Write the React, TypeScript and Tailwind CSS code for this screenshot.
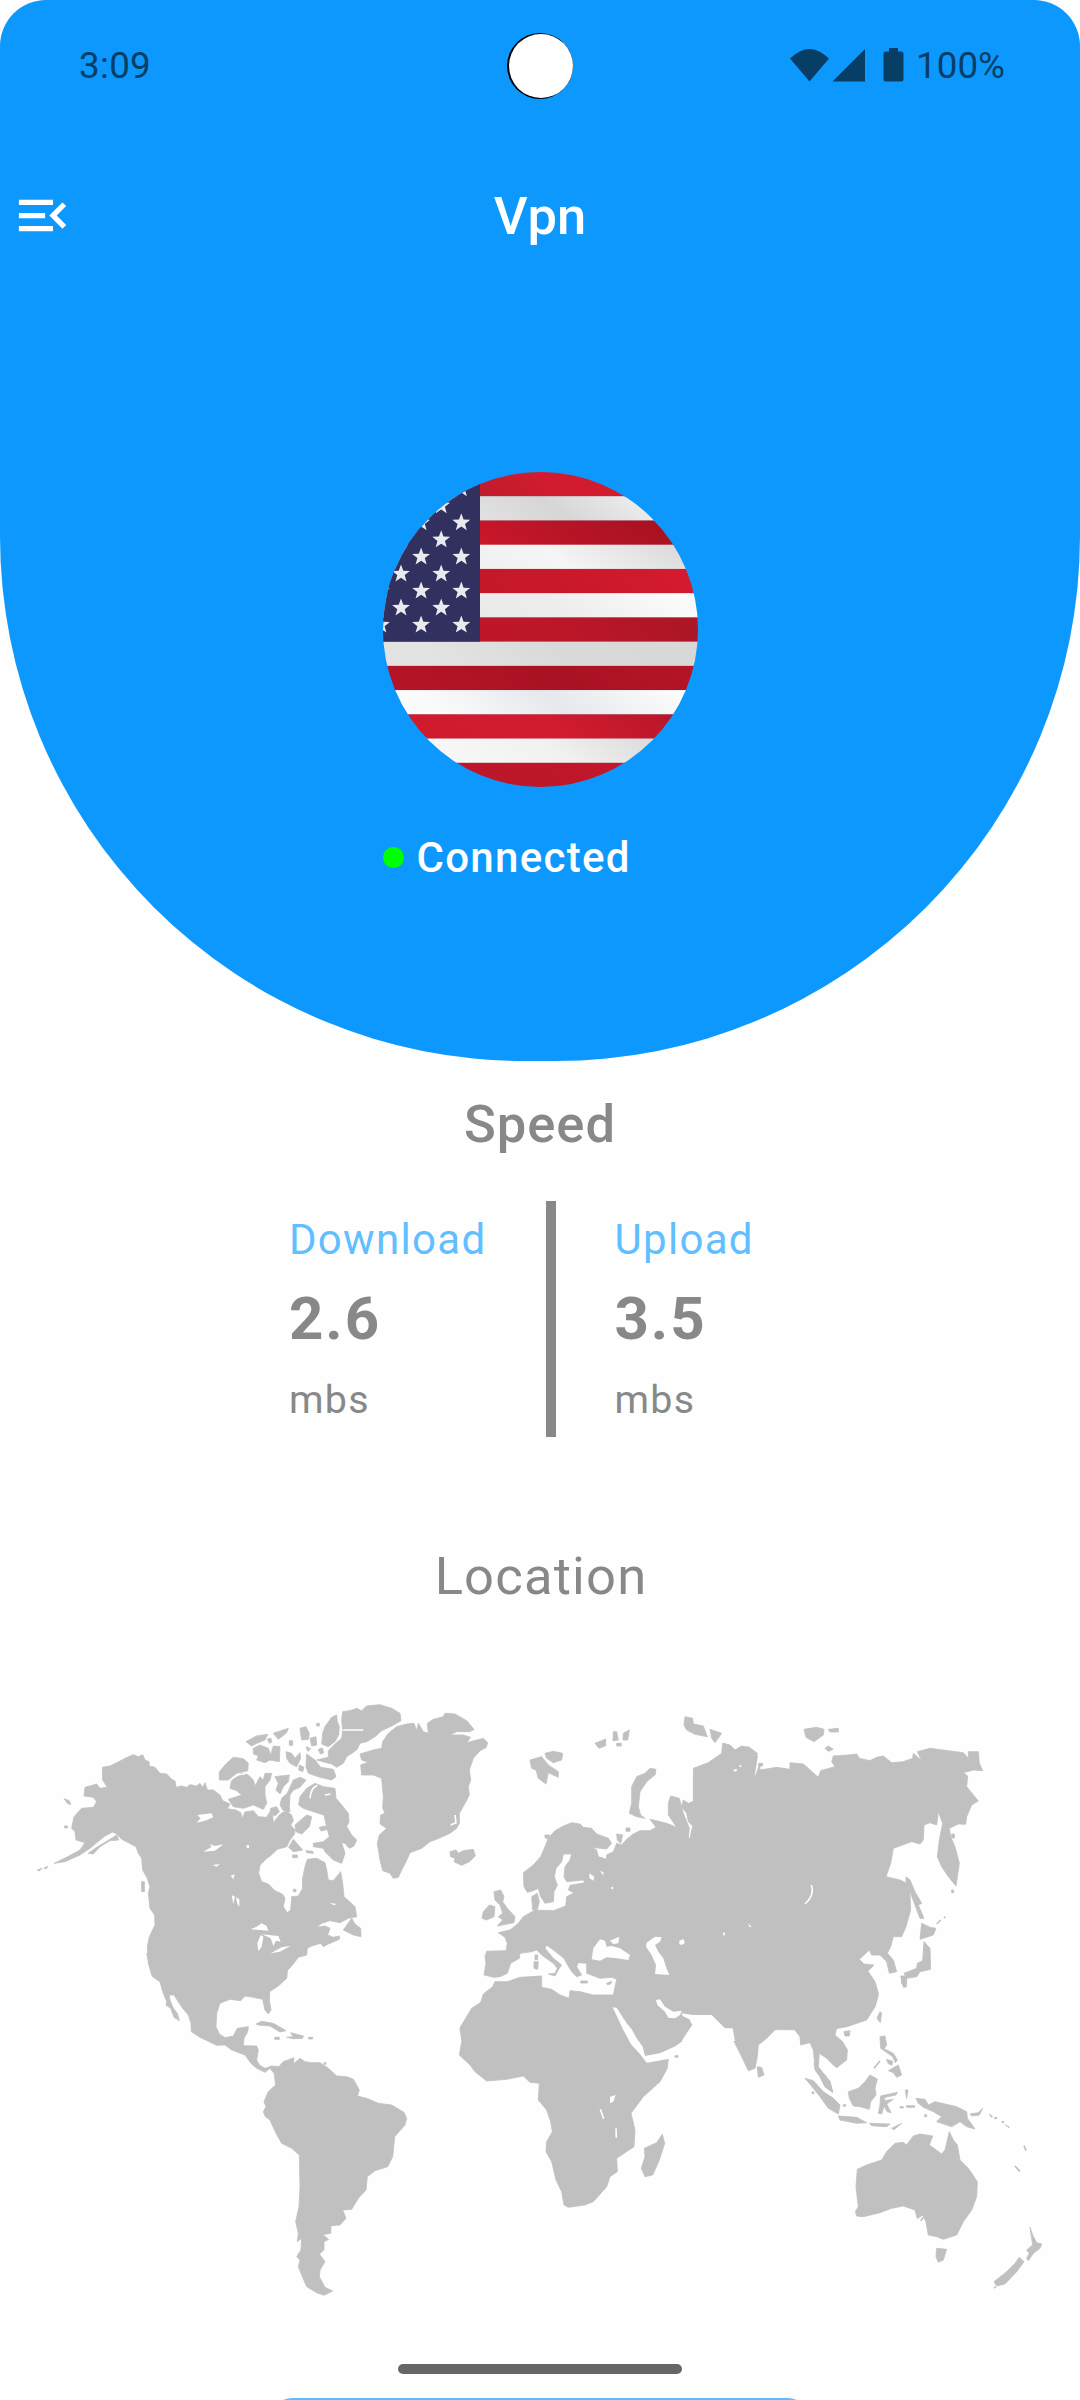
import { MdMenuOpen } from "react-icons/md";

type Region = { x: number; y: number; land: string[]; water?: string[]; landLines?: string; waterLines?: string };

// Each region has its own origin; its coordinates are thirds of a pixel.
const regions: Region[] = [
  {
    // Eurasia, west
    x: 420, y: 1700,
    land: [
      "M1020 190L1005 232L998 228L1008 190L1012 160L985 140L958 142L948 165L935 140L912 130L908 160L915 175L870 185L845 215L840 240L858 250L820 270L825 285L855 305L860 320L830 300L805 310L790 300L785 320L800 340L805 365L818 378L810 415L805 415L808 385L790 340L778 295L752 288L745 310L745 345L770 382L740 370L700 360L690 358L708 382L690 392L660 392L640 402L620 418L605 435L590 430L580 455L560 465L560 478L535 470L530 450L515 442L560 447L575 430L565 415L530 402L515 385L490 382L480 372L455 368L430 378L405 392L385 415L375 440L362 470L340 495L310 518L312 560L322 577L340 572L355 565L362 590L375 610L400 605L402 575L412 555L403 530L408 505L425 485L430 462L455 462L450 480L435 500L432 530L440 545L490 540L495 548L450 556L445 570L462 578L440 590L437 618L400 632L345 630L310 650L295 670L270 690L235 698L255 712L262 730L258 752L200 754L195 770L198 790L192 825L222 832L240 830L262 820L272 790L298 775L300 760L335 755L350 750L365 765L400 790L412 805L405 820L385 822L405 828L418 805L425 795L400 775L375 745L380 735L400 750L432 775L440 790L455 815L470 830L485 825L470 800L475 788L500 790L500 820L540 835L575 832L590 838L580 885L550 885L520 885L480 875L450 872L447 895L420 885L395 868L365 862L365 828L300 832L262 845L225 845L218 860L190 882L180 915L150 940L120 985L125 1020L1020 1020Z",
      "M335 590L352 580L358 605L352 628L338 630Z",
      "M222 575L242 570L252 590L248 605L262 625L285 650L282 668L232 678L248 660L235 650L248 640L240 615L225 600Z",
      "M190 635L208 615L225 620L222 650L200 660L186 655Z",
      "M342 785L355 785L353 808L342 805ZM345 765h8v14h-8zM482 843h20v6h-20zM560 850l15-6l-3 8l-10 2z",
      "M330 180L365 170L385 195L415 215L415 232L385 218L378 252L355 235L348 210L335 205Z",
      "M375 160L400 154L428 160L425 180L400 188L380 175Z",
      "M525 130l20-8l12-5v20l-20 8zM580 95l10 0l5 25l-16 2zM610 100l18-10l-5 30l-14 0zM590 130l14 0v8h-14z",
      "M690 205L708 208L705 225L680 245L660 275L655 320L662 345L675 355L650 350L628 340L635 310L635 260L650 230L675 220Z",
      "M795 50L818 55L820 72L850 78L862 110L825 103L800 90L792 75Z",
      "M870 88L905 100L885 128L875 115ZM618 384h12v10h-12zM590 402L608 405L602 430L592 420ZM375 405l14 0l-4 12l-10-4z",
    ],
    water: [
      "M540 718L555 722L560 740L575 738L600 745L630 765L625 780L590 775L560 772L540 782L515 778L520 745Z",
      "M570 722L598 710L595 730L580 732Z",
      "M680 728L705 710L725 712L720 725L705 735L715 755L730 775L738 800L748 825L705 822L708 795L695 765L678 740Z",
      "M778 722L790 717L795 728L786 735L778 732Z",
      "M708 900L720 898L735 920L760 935L785 932L780 945L765 955L745 953L735 935L712 915Z",
      "M785 940L820 945L875 945L915 985L938 985L945 1023L785 1023L800 1000L817 975L808 958L788 948Z",
      "M508 520l15 10l-3 12l-12-8zM540 512l10 5v10zM574 561h6v6h-6zM908 700l8-4l-4 14zM983 670l12 10l-6 2z",
    ],
  },
  {
    // Eurasia, east
    x: 700, y: 1690,
    land: [
      "M-20 235L25 218L65 190L68 160L90 165L105 180L125 168L155 178L172 200L162 262L180 240L230 232L270 238L270 218L310 222L355 262L362 242L405 230L395 215L400 198L445 195L470 192L478 205L510 212L530 202L550 198L575 218L610 215L638 205L640 190L665 212L652 185L690 175L790 188L805 205L805 185L835 185L838 220L848 242L820 240L790 248L803 258L800 290L835 333L815 345L800 380L797 403L775 402L748 415L752 440L765 470L778 520L768 588L745 560L725 530L712 500L718 450L728 400L715 365L710 405L690 398L672 405L670 450L660 462L635 455L580 475L572 520L558 560L600 570L620 580L630 610L632 660L618 710L605 740L580 740L572 770L562 790L580 810L590 845L568 850L560 815L540 795L515 795L508 780L478 808L492 822L522 825L502 845L525 880L535 915L525 950L495 990L440 1010L380 1020L95 1018L70 1010L40 975L-20 970Z",
      "M618 560L630 570L645 605L665 640L655 645L672 685L660 685L645 645L632 610L618 575Z",
      "M665 700L690 712L708 715L700 735L685 740L660 748Z",
      "M672 755L690 775L692 838L660 845L650 860L620 865L612 850L650 835L652 820L668 812Z",
      "M605 865L620 870L618 892L604 880ZM540 965L545 970L541 998L531 985Z",
      "M312 118L350 112L372 118L370 135L342 155L318 142ZM385 118L415 115L415 126L390 126ZM375 175L385 168L400 178L385 184ZM176 220h12v8h-12zM755 432h8v12h-8zM755 600h6v8h-6z",
    ],
    water: ["M98 240L112 236L108 246ZM118 226h6v5h-6z"],
    landLines: "M710 702L722 690M732 684L736 680",
    waterLines: "M334 585Q345 615 315 642",
  },
  {
    // South Asia and Indochina
    x: 620, y: 1900,
    land: [
      "M190 340L275 345L315 388L335 382L340 420L365 470L385 512L405 505L412 470L415 435L440 415L472 382L510 372L540 410L542 435L570 428L580 450L585 500L600 530L615 560L638 578L630 545L610 520L595 500L598 460L620 475L640 495L650 503L680 480L682 450L668 425L645 405L650 385L685 378L740 360L765 320L775 280L765 245L745 215L600 100L200 100Z",
      "M412 500L425 502L432 525L415 532ZM672 395L690 392L688 408L675 408Z",
    ],
  },
  {
    // Africa and Arabia
    x: 430, y: 1940,
    land: [
      "M165 160L155 185L125 205L92 260L96 300L88 345L120 375L135 395L170 423L230 418L280 408L300 427L328 430L325 480L350 510L362 545L367 575L350 605L348 635L365 665L378 720L395 755L402 795L415 802L465 795L490 785L530 740L540 710L562 695L560 655L612 620L615 570L603 520L640 470L690 425L712 385L715 357L650 368L635 345L600 310L585 280L550 205L540 180L415 200L300 150Z",
      "M560 200L645 348L690 340L735 318L775 290L788 255L760 230L720 230L680 180L560 160Z",
      "M697 583L704 610L688 660L668 705L645 710L634 685L645 650L643 625L680 608ZM735 347h9v5h-9z",
    ],
    water: [
      "M548 202L560 203L590 250L605 268L620 295L638 320L645 348L690 340L740 318L718 356L650 368L630 342L605 315L580 270Z",
      "M540 470L557 465L550 485L540 490Z",
    ],
    waterLines: "M511 508L521 536M558 565L559 593",
  },
  {
    // Canada, Alaska and the northern United States
    x: 0, y: 1680,
    land: [
      "M307 262L330 258L350 248L385 230L400 224L415 230L428 224L435 240L447 245L448 258L465 262L480 280L500 282L515 298L525 303L528 322L545 318L560 322L570 314L590 318L600 310L608 322L615 308L622 330L640 330L660 345L668 362L690 372L682 386L708 390L722 398L727 415L735 396L760 392L775 410L800 412L808 398L818 405L820 428L838 405L850 396L862 395L875 405L880 422L872 435L885 450L884 462L870 480L860 500L832 508L815 524L795 540L780 556L776 580L785 605L805 612L825 632L848 643L855 655L850 680L862 698L872 690L875 650L895 648L908 625L907 600L915 560L922 538L950 535L975 548L980 570L985 600L1000 602L1022 575L1028 610L1032 650L1065 680L1070 710L1045 715L1020 728L990 722L965 730L950 742L975 738L990 745L983 765L1000 772L1018 768L1018 778L985 792L970 800L962 790L935 798L922 805L920 825L895 832L880 852L862 872L860 895L835 918L808 935L808 950L700 945L500 945L480 905L458 890L445 850L442 800L448 770L465 735L464 705L450 685L445 640L450 620L442 595L428 570L425 535L415 520L408 500L385 488L365 478L350 462L338 456L315 468L300 480L270 505L240 525L195 545L162 550L200 532L240 510L255 488L228 480L225 455L215 445L222 410L245 385L280 382L290 365L280 352L252 348L255 322L290 312L300 325L322 322L308 300Z",
      "M265 520L290 502L335 475L350 465L356 480L330 482L300 500L280 522Z",
      "M425 605h8v30h-8zM448 668L475 690L484 706L462 692ZM192 356L208 362L212 374L202 370ZM194 438h8v6h-8zM112 570l14-5l-8 8zM132 564l12-5l-6 8z",
    ],
    water: [
      "M590 428L602 415L592 405L635 400L640 412L615 422Z",
      "M610 515L635 500L628 492L645 498L670 493L645 512Z",
      "M638 555L660 552L650 560ZM692 588L704 582L700 598ZM740 495h7v9h-7z",
      "M695 645L705 650L700 672ZM708 652L718 658L718 680L712 672Z",
      "M752 748L770 740L785 730L800 738L805 752L780 750Z",
      "M775 814L772 790L782 765L790 770L785 800Z",
      "M786 763L835 768L842 785L828 782L820 798L812 775Z",
      "M812 820L845 802L872 797L840 815Z",
      "M990 668L1010 672L1000 676Z",
    ],
  },
  {
    // Arctic islands, Greenland and Iceland
    x: 200, y: 1680,
    land: [
      "M428 95L450 92L470 85L485 92L500 78L540 74L575 85L600 100L603 122L575 138L545 152L525 170L500 185L480 190L470 210L440 230L430 250L410 262L395 252L350 240L385 232L385 212L405 192L425 175L428 150L425 120Z",
      "M410 105L395 112L375 140L368 160L365 192L385 200L405 185L416 165L418 140L412 125Z",
      "M320 222L345 240L362 262L400 268L408 290L395 300L360 292L325 280L318 260Z",
      "M300 145L318 140L328 160L325 178L305 180ZM330 175L348 170L350 195L335 198ZM350 130h8v8h-8zM268 182h10v14h-10zM355 208l12-4l4 14l-10 4zM318 200l14 6l-8 8zM202 178l10-4l4 12l-8 4z",
      "M138 185L170 168L203 163L195 180L170 190L155 198ZM220 160L265 145L260 158L235 178Z",
      "M160 205L180 195L205 205L212 225L220 198L240 200L238 245L210 240L195 248L170 240L175 228L160 222Z",
      "M258 215L275 220L285 235L300 218L302 235L290 260L270 250L260 235ZM298 255L312 262L308 275L296 270Z",
      "M100 232L130 236L145 250L143 272L110 280L85 300L58 300L58 275L80 250Z",
      "M95 300L125 280L145 285L160 300L165 318L180 290L190 300L195 280L215 280L210 300L195 320L195 345L200 370L190 388L160 375L130 385L100 380L85 358L110 350L125 345L110 332L90 325Z",
      "M225 290L268 285L265 305L250 320L240 342L228 330L235 310Z",
      "M280 300L300 292L318 300L300 322L280 330L270 345L268 380L270 395L250 392L240 375L245 355L262 340ZM212 385L230 380L238 395L225 408L210 398Z",
      "M345 310L370 320L405 325L408 355L425 375L445 400L447 425L440 440L455 465L470 480L462 498L448 505L435 490L425 488L435 520L425 550L400 540L375 515L370 505L340 500L340 490L370 485L388 470L380 440L372 405L340 395L310 385L296 375L300 350L320 325Z",
      "M285 435L320 405L335 410L328 440L305 462L288 455ZM266 502L280 478L308 510L280 515ZM278 525h14v8h-14zM358 442l20-4l5 10l-20 5zM280 628h8v7h-8zM318 512l20 2l2 6l-20-2z",
      "M430 750L455 715L465 732L482 745L483 770L460 765Z",
      "M480 222L520 210L545 205L548 185L565 160L590 140L620 132L642 130L650 152L655 130L670 155L685 160L682 130L700 118L730 110L735 100L765 102L800 122L822 148L810 155L770 155L750 165L790 165L812 172L800 188L850 175L863 188L858 203L840 212L820 235L808 270L812 300L805 320L808 345L795 370L778 400L778 430L770 445L750 460L710 478L690 485L665 505L630 518L618 545L605 570L595 592L580 595L570 580L548 572L540 540L532 490L538 465L560 445L540 432L542 405L555 400L548 385L550 350L545 295L520 285L485 285L482 255L505 247L485 240Z",
      "M750 515L768 510L775 520L790 512L820 508L826 528L808 545L785 556L762 545L765 535L752 530Z",
    ],
    waterLines: "M428 150L490 150M330 355Q332 325 352 316M375 345L392 342M90 302Q108 282 135 282M752 435L768 428L765 405",
  },
  {
    // Central and South America
    x: 120, y: 1960,
    land: [
      "M80 -20L95 45L120 65L128 95L140 125L138 135L152 145L162 172L178 182L172 160L160 145L150 120L145 90L155 92L170 118L188 145L205 165L213 190L214 215L240 232L290 256L315 255L335 270L375 285L393 310L410 325L435 337L450 325L462 340L475 320L455 318L435 325L418 315L410 300L415 270L410 258L370 257L372 235L383 215L385 200L352 205L340 228L315 233L298 222L288 200L290 160L300 130L330 118L362 122L375 108L400 112L428 118L435 150L445 162L453 150L448 120L448 95L480 70L500 52L500 30L525 0L525 -20Z",
      "M462 335L467 375L445 395L432 425L438 440L430 455L436 470L450 480L468 520L485 550L515 565L538 585L540 680L537 740L527 785L535 820L532 845L545 835L543 870L530 890L540 900L535 920L545 945L560 980L590 998L612 1006L638 993L615 982L598 950L600 930L615 905L598 882L612 870L612 845L626 838L608 824L632 820L633 797L660 795L678 775L668 750L695 748L715 715L738 690L742 650L765 632L803 620L818 590L824 530L855 495L860 475L852 457L815 435L775 430L740 415L712 408L718 390L700 358L680 350L650 348L625 325L600 308L575 308L555 305L540 295L520 312L522 293L490 305L472 325Z",
      "M408 192L425 184L460 190L498 212L480 216L450 198L415 195ZM500 232L520 230L512 218L550 228L548 235L520 236ZM464 232h14v6h-14zM566 232h12v5h-12zM612 308h6v5h-6z",
    ],
  },
  {
    // South-East Asia and Oceania
    x: 760, y: 1980,
    land: [
      "M292 568L320 555L365 540L380 515L405 490L430 487L440 495L460 468L480 462L518 468L508 495L545 522L555 510L568 455L580 480L592 495L600 540L625 565L652 605L650 650L635 690L610 725L590 765L550 778L530 770L505 765L498 725L488 705L472 716L465 690L430 678L395 685L360 698L310 710L290 708L286 695L295 680L288 620Z",
      "M530 805L560 808L550 840L535 847L528 830Z",
      "M810 742L818 765L830 788L845 792L840 805L820 820L805 842L800 835L808 820L800 810L818 795Z",
      "M778 832L792 845L770 875L735 912L710 918L702 905L740 875L765 850Z",
      "M135 295L160 302L190 335L220 355L240 375L235 402L205 385L180 350L160 325Z",
      "M162 250L175 265L195 285L210 305L218 335L195 320L180 290L165 270Z",
      "M235 408L290 412L320 428L290 430L240 420ZM328 430L390 432L380 440L335 437ZM395 445L425 430L402 449Z",
      "M265 335L295 325L315 305L330 285L352 297L345 325L348 345L332 365L328 388L300 380L280 378L268 355Z",
      "M362 348L412 337L408 345L375 352L372 362L400 358L380 372L393 398L382 395L372 378L365 402L355 400L360 375Z",
      "M360 170L375 168L380 195L372 206L400 220L412 240L406 248L398 230L374 213L362 205ZM380 238L398 244L396 256L384 250ZM385 272L415 255L425 285L410 292L400 278Z",
      "M468 355L495 358L505 375L525 365L590 380L620 395L622 415L645 447L620 440L600 425L575 440L530 425L545 410L520 395L490 382L475 370ZM630 402L655 398L668 385L658 405L635 408Z",
      "M436 330h8l-4 25zM440 377h24v5h-24zM420 380h10v4h-10zM688 402l10 8l-4 2zM704 412h6v4h-6zM726 424h5v4h-5zM736 434l12 8l-4 0zM250 374h7v5h-7zM156 336h6v5h-6zM494 404h6v6h-6zM422 -12L440 -12L438 20L430 22Z",
    ],
    landLines: "M360 243L342 265M765 558L780 575M792 497L798 512M702 924L708 920M482 722L490 712",
  },
];

function WorldMap() {
  return (
    <svg className="block h-[740px] w-full shrink-0" viewBox="0 1640 1080 740" aria-label="World map">
      {regions.map((r, i) => (
        <g key={i} transform={`translate(${r.x} ${r.y}) scale(0.33333)`} fill="#c0c0c0" stroke="#c0c0c0" strokeWidth="2.5" strokeLinejoin="round">
          {r.land.map((d, j) => <path key={j} d={d} />)}
          {r.landLines && <path d={r.landLines} fill="none" strokeWidth="5" />}
        </g>
      ))}
      {regions.map((r, i) => (
        <g key={i} transform={`translate(${r.x} ${r.y}) scale(0.33333)`} fill="#fefefe">
          {r.water?.map((d, j) => <path key={j} d={d} />)}
          {r.waterLines && <path d={r.waterLines} fill="none" stroke="#fefefe" strokeWidth="5" />}
        </g>
      ))}
    </svg>
  );
}

const starPoints = Array.from({ length: 10 }, (_, i) => {
  const radius = i % 2 ? 3.9 : 9.4;
  const a = (Math.PI / 5) * i - Math.PI / 2;
  return `${(radius * Math.cos(a)).toFixed(2)},${(radius * Math.sin(a)).toFixed(2)}`;
}).join(" ");

const stars: [number, number][] = [];
for (let row = 0; row < 10; row++)
  for (let col = 0; col < 5; col++)
    if ((row + col) % 2 === 0) stars.push([78.3 - col * 20.1, 153 - row * 17.05]);

// Left, middle and right shade of each stripe.
const stripes = [
  ["#b81b2b", "#d31b30", "#d31b30"],
  ["#e6e6e6", "#d6d6d6", "#f4f4f4"],
  ["#d2182d", "#b91527", "#a61220"],
  ["#eeeeee", "#f5f5f5", "#dddddd"],
  ["#c4172a", "#c9182b", "#d41a2e"],
  ["#e9e9e9", "#ededed", "#fafafa"],
  ["#c0172a", "#bd172a", "#ad1626"],
  ["#e3e3e3", "#dadada", "#d8d8d8"],
  ["#b31426", "#a81222", "#b31426"],
  ["#fbfbfb", "#e6e8ec", "#fbfbfb"],
  ["#d01a2e", "#d21b2f", "#b81729"],
  ["#f8f8f8", "#f1f1f1", "#d9d9d9"],
  ["#b91528", "#be172a", "#c4182c"],
];

function Flag() {
  const h = 315 / 13;
  return (
    <svg className="block size-[315px] rounded-full" viewBox="0 0 315 315" aria-label="United States">
      <defs>
        {stripes.map(([a, b, c], i) => (
          <linearGradient key={i} id={`stripe${i}`} x1="0" x2="1" y1="0.1" y2="0">
            <stop offset="0.1" stopColor={a} />
            <stop offset="0.5" stopColor={b} />
            <stop offset="0.9" stopColor={c} />
          </linearGradient>
        ))}
      </defs>
      {stripes.map((_, i) => (
        <rect key={i} y={i * h} width="315" height={h + 0.4} fill={`url(#stripe${i})`} />
      ))}
      <rect width="97" height={h * 7} fill="#31305f" />
      {stars.map(([x, y], i) => (
        <polygon key={i} points={starPoints} transform={`translate(${x} ${y})`} fill="#e9e9ee" />
      ))}
    </svg>
  );
}

function StatusBar() {
  return (
    <div className="relative flex h-[132px] items-center justify-between pr-[75px] pl-[79px] text-[36.75px] leading-none text-[#063e66]">
      <span className="tracking-[0.3px]">3:09</span>
      <div className="absolute top-[33px] left-[507px] size-[66px] rounded-full bg-black pt-px pl-[1.5px]">
        <div className="size-[64px] rounded-full bg-white" />
      </div>
      <div className="flex items-center">
        <svg className="mr-[12px] mb-[2px] h-[34px] w-[115px]" viewBox="0 0 115 34" fill="currentColor">
          <path d="M20.5 33.500L1 10.500Q20.500 -8.500 40 10.500Z" />
          <path d="M76 1V33.500H43.500Z" />
          <path d="M100 0h9v3.500h3q2.500 0 2.500 2.500v25q0 2.500-2.500 2.500h-15q-2.500 0-2.500-2.500v-25q0-2.500 2.500-2.500h3z" />
        </svg>
        <span>100%</span>
      </div>
    </div>
  );
}

function Speed({ label, value }: { label: string; value: string }) {
  return (
    <div className="flex flex-col text-[#888888]">
      <span className="text-[42px] leading-[60px] tracking-[1.3px] text-[#61bfff]">{label}</span>
      <span className="mt-[9px] text-[60px] leading-[80px] font-bold tracking-[1.9px]">{value}</span>
      <span className="mt-[13px] text-[39.4px] leading-[56px] tracking-[1.3px]">mbs</span>
    </div>
  );
}

export default function App() {
  return (
    <div className="flex h-[2400px] w-[1080px] flex-col overflow-hidden bg-[#fefefe] font-[Roboto,sans-serif]">
      <header className="h-[1061px] shrink-0 rounded-t-[46px] rounded-b-[525px] bg-[#0d98fd] text-white">
        <StatusBar />
        <div className="grid h-[168px] grid-cols-3 items-center">
          <MdMenuOpen className="mb-[2px] ml-[11px] size-[63px]" />
          <h1 className="text-center text-[52.5px] leading-[60px] font-medium">Vpn</h1>
        </div>
        <div className="mx-auto mt-[172px] w-[315px]">
          <Flag />
          <div className="mt-[40px] flex items-center">
            <span className="size-[21px] rounded-full bg-[#00ff00]" />
            <span className="ml-[13px] pt-[2px] text-[42px] leading-[58px] font-medium tracking-[1.3px]">Connected</span>
          </div>
        </div>
      </header>

      <h2 className="mt-[27px] text-center text-[52.5px] leading-[72px] font-medium tracking-[1px] text-[#888888]">Speed</h2>
      <section className="mt-[41px] flex h-[236px] shrink-0 pl-[289px]">
        <div className="w-[256.500px] pt-[9px]"><Speed label="Download" value="2.6" /></div>
        <div className="h-full w-[10.5px] bg-[#888888]" />
        <div className="pt-[9px] pl-[58.5px]"><Speed label="Upload" value="3.5" /></div>
      </section>
      <h2 className="mt-[103px] pl-[2px] text-center text-[52.5px] leading-[72px] tracking-[1.2px] text-[#888888]">Location</h2>

      <div className="mt-[28px] h-[758px] shrink-0">
        <WorldMap />
      </div>
      <div className="mx-auto h-[52px] w-[546px] shrink-0 rounded-[26px] bg-[#5cbefd]" />
      <div className="fixed top-[2364px] left-[398px] h-[10px] w-[284px] rounded-full bg-[#666666]" />
    </div>
  );
}
